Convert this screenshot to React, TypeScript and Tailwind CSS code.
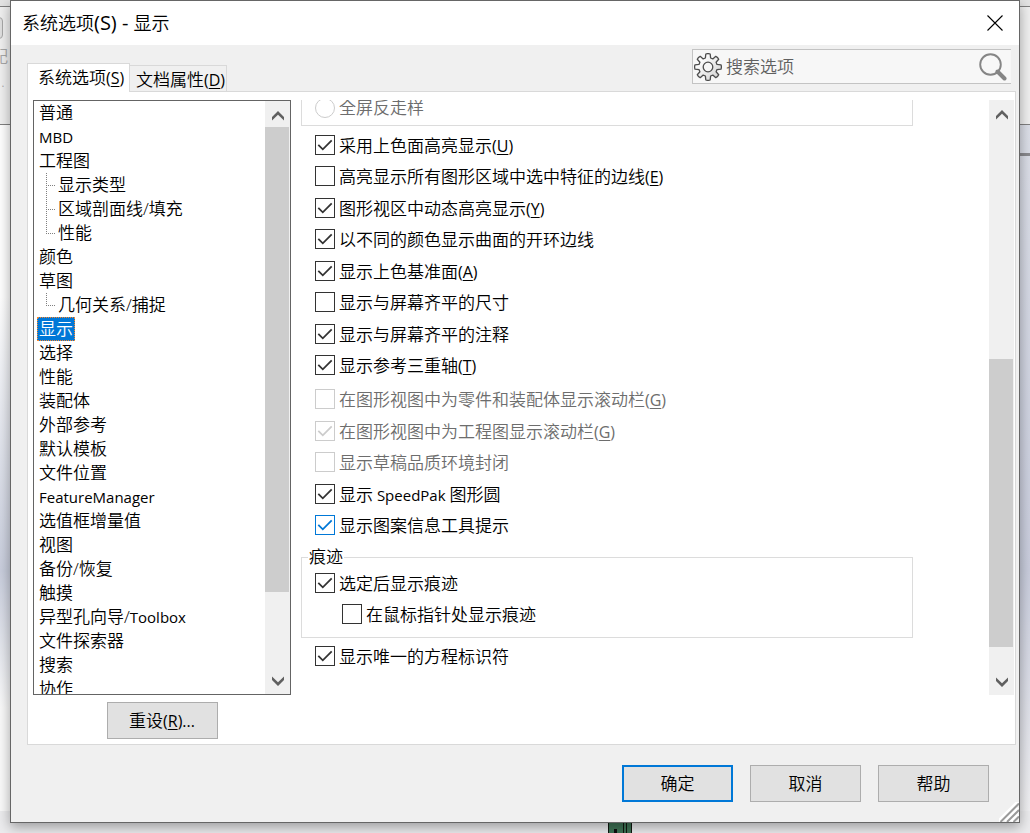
import clsx from "clsx";
import type { JSX } from "react";

type TreeItem = {
  label: string;
  branch?: "middle" | "last";
};

type Option = {
  label: string;
  accessKey?: string;
  checked?: boolean;
  disabled?: boolean;
  hot?: boolean;
};

const TREE_ITEMS: TreeItem[] = [
  { label: "普通" },
  { label: "MBD" },
  { label: "工程图" },
  { label: "显示类型", branch: "middle" },
  { label: "区域剖面线/填充", branch: "middle" },
  { label: "性能", branch: "last" },
  { label: "颜色" },
  { label: "草图" },
  { label: "几何关系/捕捉", branch: "last" },
  { label: "显示" },
  { label: "选择" },
  { label: "性能" },
  { label: "装配体" },
  { label: "外部参考" },
  { label: "默认模板" },
  { label: "文件位置" },
  { label: "FeatureManager" },
  { label: "选值框增量值" },
  { label: "视图" },
  { label: "备份/恢复" },
  { label: "触摸" },
  { label: "异型孔向导/Toolbox" },
  { label: "文件探索器" },
  { label: "搜索" },
  { label: "协作" },
];

const DISPLAY_OPTIONS: Option[] = [
  { label: "采用上色面高亮显示", accessKey: "U", checked: true },
  { label: "高亮显示所有图形区域中选中特征的边线", accessKey: "E" },
  { label: "图形视区中动态高亮显示", accessKey: "Y", checked: true },
  { label: "以不同的颜色显示曲面的开环边线", checked: true },
  { label: "显示上色基准面", accessKey: "A", checked: true },
  { label: "显示与屏幕齐平的尺寸" },
  { label: "显示与屏幕齐平的注释", checked: true },
  { label: "显示参考三重轴", accessKey: "T", checked: true },
];

const VIEW_OPTIONS: Option[] = [
  { label: "在图形视图中为零件和装配体显示滚动栏", accessKey: "G", disabled: true },
  { label: "在图形视图中为工程图显示滚动栏", accessKey: "G", checked: true, disabled: true },
  { label: "显示草稿品质环境封闭", disabled: true },
  { label: "显示 SpeedPak 图形圆", checked: true },
  { label: "显示图案信息工具提示", checked: true, hot: true },
];

const DIALOG_BUTTONS = ["确定", "取消", "帮助"];

// Latin runs are set a little smaller than the Chinese text around them
function Caption({ text, accessKey, suffix }: { text: string; accessKey?: string; suffix?: string }): JSX.Element {
  return (
    <span className="whitespace-pre">
      {text.split(/( ?[A-Za-z]+ ?)/).map((run, index) =>
        index % 2 === 1 ? (
          <span key={index} className="text-[15px] font-normal">
            {run}
          </span>
        ) : (
          run
        )
      )}
      {accessKey && (
        <span className="text-base leading-5 font-normal">
          (<span className="underline underline-offset-2">{accessKey}</span>){suffix}
        </span>
      )}
    </span>
  );
}

function CheckOption({ option }: { option: Option }): JSX.Element {
  return (
    <label
      className={clsx(
        "flex w-fit items-start gap-1 leading-[22px]",
        option.disabled ? "text-[#6d6d6d]" : "text-black"
      )}>
      <span className="relative size-5 shrink-0">
        <input
          type="checkbox"
          defaultChecked={option.checked}
          disabled={option.disabled}
          className={clsx(
            "peer block size-5 appearance-none border bg-white",
            option.disabled ? "border-[#cccccc]" : option.hot ? "border-[#0078d7]" : "border-[#333333]"
          )}
        />
        <svg
          viewBox="0 0 20 20"
          fill="none"
          strokeWidth="1.8"
          className={clsx(
            "pointer-events-none invisible absolute inset-0 size-5 peer-checked:visible",
            option.disabled ? "stroke-[#cccccc]" : option.hot ? "stroke-[#0078d7]" : "stroke-[#333333]"
          )}>
          <path d="M3.3 9.8 L7.8 14.3 L16.7 5.4" />
        </svg>
      </span>
      <Caption text={option.label} accessKey={option.accessKey} />
    </label>
  );
}

function Chevron({ down = false }: { down?: boolean }): JSX.Element {
  return (
    <svg viewBox="0 0 12 10" className={clsx("h-[10px] w-3", down && "rotate-180")} fill="#606060">
      <path d="M6 0 L12 6 V9.5 L6 3.8 L0 9.5 V6 Z" />
    </svg>
  );
}

function ScrollBar({ start, size }: { start: number; size: number }): JSX.Element {
  return (
    <div className="flex w-[25px] shrink-0 flex-col bg-[#f0f0f0]">
      <button type="button" aria-label="向上滚动" className="flex h-[26px] items-center justify-center pt-1">
        <Chevron />
      </button>
      <div className="min-h-0 flex-1 pr-px">
        <div style={{ height: `${start}%` }} />
        <div className="bg-[#cdcdcd]" style={{ height: `${size}%` }} />
      </div>
      <button type="button" aria-label="向下滚动" className="flex h-[26px] items-center justify-center">
        <Chevron down />
      </button>
    </div>
  );
}

function Branch({ kind }: { kind: "middle" | "last" }): JSX.Element {
  return (
    <svg viewBox="0 0 10 24" className="ml-[9px] h-6 w-[10px] shrink-0" stroke="#808080" strokeDasharray="1 1">
      <path d={kind === "last" ? "M0.5 0 V13" : "M0.5 0 V24"} />
      <path d="M2 12.5 H9" />
    </svg>
  );
}

function OptionsTree(): JSX.Element {
  return (
    <div className="flex min-h-0 w-full flex-1 border border-[#646464] bg-white">
      <ul className="min-w-0 flex-1 overflow-hidden pl-[3px]">
        {TREE_ITEMS.map((item, index) => (
          <li key={index} className="flex h-6">
            {item.branch && <Branch kind={item.branch} />}
            <button
              type="button"
              className={clsx(
                "px-[2px] leading-6",
                item.label === "显示" &&
                  "bg-[#0078d7] text-white outline-1 -outline-offset-1 outline-dotted outline-[#ff8728]"
              )}>
              <Caption text={item.label} />
            </button>
          </li>
        ))}
      </ul>
      <ScrollBar start={0} size={86} />
    </div>
  );
}

function GearIcon(): JSX.Element {
  return (
    <svg viewBox="0 0 28 28" className="size-7 shrink-0" stroke="#4d4d4d" strokeWidth="1.3" strokeLinejoin="round">
      <defs>
        <linearGradient id="gear" x1="0" y1="0" x2="1" y2="1">
          <stop offset="0.2" stopColor="#ffffff" />
          <stop offset="1" stopColor="#cfcfcf" />
        </linearGradient>
      </defs>
      <path
        fill="url(#gear)"
        d="M11.8 1 Q14 0.2 16.2 1 L16.6 5 L18.8 5.9 L21.8 3.3 Q23.8 4.2 24.7 6.2 L22.1 9.2 L23 11.4 L27 11.8 Q27.8 14 27 16.2 L23 16.6 L22.1 18.8 L24.7 21.8 Q23.8 23.8 21.8 24.7 L18.8 22.1 L16.6 23 L16.2 27 Q14 27.8 11.8 27 L11.4 23 L9.2 22.1 L6.2 24.7 Q4.2 23.8 3.3 21.8 L5.9 18.8 L5 16.6 L1 16.2 Q0.2 14 1 11.8 L5 11.4 L5.9 9.2 L3.3 6.2 Q4.2 4.2 6.2 3.3 L9.2 5.9 L11.4 5 Z"
      />
      <circle cx="14" cy="14" r="4.8" fill="#f7f7f7" />
    </svg>
  );
}

function SearchBox(): JSX.Element {
  return (
    <div className="mt-1 flex h-[35px] w-[319px] items-center border border-r-0 border-[#c3c3c3] bg-[#f7f7f7] pl-px">
      <GearIcon />
      <input
        type="text"
        aria-label="搜索选项"
        placeholder="搜索选项"
        className="ml-1 min-w-0 flex-1 bg-transparent leading-5 outline-none placeholder:text-[#606060]"
      />
      <button type="button" aria-label="搜索" className="mr-1">
        <svg viewBox="0 0 30 30" className="size-[30px]" fill="none" stroke="#858585">
          <circle cx="13.5" cy="12.5" r="10.3" strokeWidth="1.9" />
          <path d="M20.5 19.5 L27.5 26.5" strokeWidth="4" strokeLinecap="round" />
        </svg>
      </button>
    </div>
  );
}

function Tabs(): JSX.Element {
  return (
    <div role="tablist" className="-mb-px flex items-end self-end">
      <button
        type="button"
        role="tab"
        aria-selected="true"
        className="flex h-[29px] w-[103px] items-start border border-b-0 border-[#d9d9d9] bg-white pt-1 pl-[10px] leading-5">
        <Caption text="系统选项" accessKey="S" />
      </button>
      <button
        type="button"
        role="tab"
        aria-selected="false"
        className="mb-px flex h-[26px] w-[97px] items-start border border-b-0 border-l-0 border-[#d9d9d9] bg-[#f0f0f0] pt-1 pl-[6px] leading-5">
        <Caption text="文档属性" accessKey="D" />
      </button>
    </div>
  );
}

function DisplayPane(): JSX.Element {
  return (
    <div className="flex min-h-0 min-w-0 flex-1">
      <div className="min-w-0 flex-1 overflow-hidden pr-[76px]">
        <div className="h-[26px] overflow-hidden border border-t-0 border-[#dcdcdc] pl-[13px]">
          <label className="-mt-0.5 flex w-fit items-center gap-1 leading-5 text-[#6d6d6d]">
            <input
              type="radio"
              disabled
              className="size-5 appearance-none rounded-full border border-[#cccccc] bg-white"
            />
            <Caption text="全屏反走样" />
          </label>
        </div>
        <ul className="mt-[9px] pl-[14px]">
          {DISPLAY_OPTIONS.map((option) => (
            <li key={option.label} className="odd:h-[31px] even:h-8">
              <CheckOption option={option} />
            </li>
          ))}
        </ul>
        <ul className="mt-0.5 pl-[14px]">
          {VIEW_OPTIONS.map((option) => (
            <li key={option.label} className="odd:h-8 even:h-[31px]">
              <CheckOption option={option} />
            </li>
          ))}
        </ul>
        <fieldset className="h-[91px] border border-[#dcdcdc] pt-[6px] pl-[13px]">
          <legend className="-ml-[7px] px-px leading-5">痕迹</legend>
          <div className="h-[31px]">
            <CheckOption option={{ label: "选定后显示痕迹", checked: true }} />
          </div>
          <div className="pl-[27px]">
            <CheckOption option={{ label: "在鼠标指针处显示痕迹" }} />
          </div>
        </fieldset>
        <div className="mt-2 pl-[14px]">
          <CheckOption option={{ label: "显示唯一的方程标识符", checked: true }} />
        </div>
      </div>
      <ScrollBar start={43} size={53} />
    </div>
  );
}

// Slivers of the main window that stay visible around the dialog
function Backdrop(): JSX.Element {
  return (
    <div aria-hidden="true" className="absolute inset-0 flex flex-col overflow-hidden">
      <div className="h-[7px] border-b border-[#808080] bg-[#e4e4e4]" />
      <div className="h-[118px] border-b border-[#808080] bg-[#f0f0f0] text-[#a8a8a8]">
        <div className="-ml-2 mt-[10px] h-[22px] w-[11px] rounded-sm border border-[#a8a8a8] bg-[#e0e0e0]" />
        <div className="-ml-[9px] mt-2 leading-5">配</div>
        <div className="mt-2 ml-px text-base leading-3">.</div>
      </div>
      <div className="flex flex-1 justify-between">
        <div className="w-1/2 bg-linear-to-b from-white from-25% via-[#c9cedd] via-65% to-[#fafafa] to-85%" />
        <div className="w-1/2 bg-linear-to-b from-[#dcdfe8] via-[#c9cddd] via-65% to-[#f0f0f2]">
          <div className="mt-[28px] h-[3px] bg-[#8a8a8e]" />
        </div>
      </div>
      <div className="h-[22px] bg-[#ececee] pt-3 pl-[608px]">
        <svg viewBox="0 0 24 10" className="h-[10px] w-6">
          <path d="M0 0 H24 V10 H0 Z" fill="#3f7355" />
          <path d="M0.5 0 V10 M15.5 0 V10 M18.5 0 V10 M23.5 0 V10" stroke="#101810" />
          <path d="M6 6 H9 V10 H6 Z" fill="#101010" />
        </svg>
      </div>
    </div>
  );
}

export default function App(): JSX.Element {
  return (
    <div className="relative flex h-screen flex-col overflow-hidden px-[10px] pb-[10px] font-['Open_Sans','Noto_Sans_CJK_SC',sans-serif] text-[17px] font-[350] text-black">
      <Backdrop />
      <div
        role="dialog"
        aria-label="系统选项(S) - 显示"
        className="relative flex min-h-0 flex-1 flex-col border border-[#666666] bg-[#f0f0f0] shadow-[0_4px_12px_rgba(0,0,0,0.35)]">
        <header className="flex h-11 shrink-0 items-center justify-between bg-white pr-4 pl-[11px]">
          <h1 className="text-lg leading-6 font-[350]">
            系统选项<span className="text-xl leading-6 font-normal">(S) - </span>显示
          </h1>
          <button type="button" aria-label="关闭">
            <svg viewBox="0 0 16 16" className="size-4" stroke="#000000" strokeWidth="1.1">
              <path d="M0.5 0.5 L15.5 15.5 M15.5 0.5 L0.5 15.5" />
            </svg>
          </button>
        </header>
        <div className="relative flex h-[46px] shrink-0 justify-between pr-2 pl-4">
          <Tabs />
          <SearchBox />
        </div>
        <main className="mr-[3px] ml-4 flex min-h-0 flex-1 gap-[10px] border border-[#d9d9d9] bg-white pt-2 pr-px pb-[5px] pl-[5px]">
          <div className="flex w-[258px] shrink-0 flex-col items-center gap-[7px]">
            <OptionsTree />
            <button
              type="button"
              className="h-[37px] w-[111px] shrink-0 border border-[#adadad] bg-[#e1e1e1] leading-5">
              <Caption text="重设" accessKey="R" suffix="..." />
            </button>
          </div>
          <div className="mb-11 flex min-w-0 flex-1">
            <DisplayPane />
          </div>
        </main>
        <footer className="flex shrink-0 justify-end gap-[17px] py-5 pr-[30px]">
          {DIALOG_BUTTONS.map((label, index) => (
            <button
              key={label}
              type="button"
              className={clsx(
                "h-[37px] w-[111px] bg-[#e1e1e1] leading-5",
                index === 0 ? "border-2 border-[#0078d7]" : "border border-[#adadad]"
              )}>
              {label}
            </button>
          ))}
        </footer>
        <svg viewBox="0 0 20 20" className="absolute right-0 bottom-0 size-5" fill="none">
          <path d="M0 20 L20 0 M7 20 L20 7 M13 20 L20 13" stroke="#ffffff" strokeWidth="5" />
          <path d="M1.5 20 L20 1.5 M8 20 L20 8 M14.5 20 L20 14.5" stroke="#9a9a9a" strokeWidth="2" />
        </svg>
      </div>
    </div>
  );
}
